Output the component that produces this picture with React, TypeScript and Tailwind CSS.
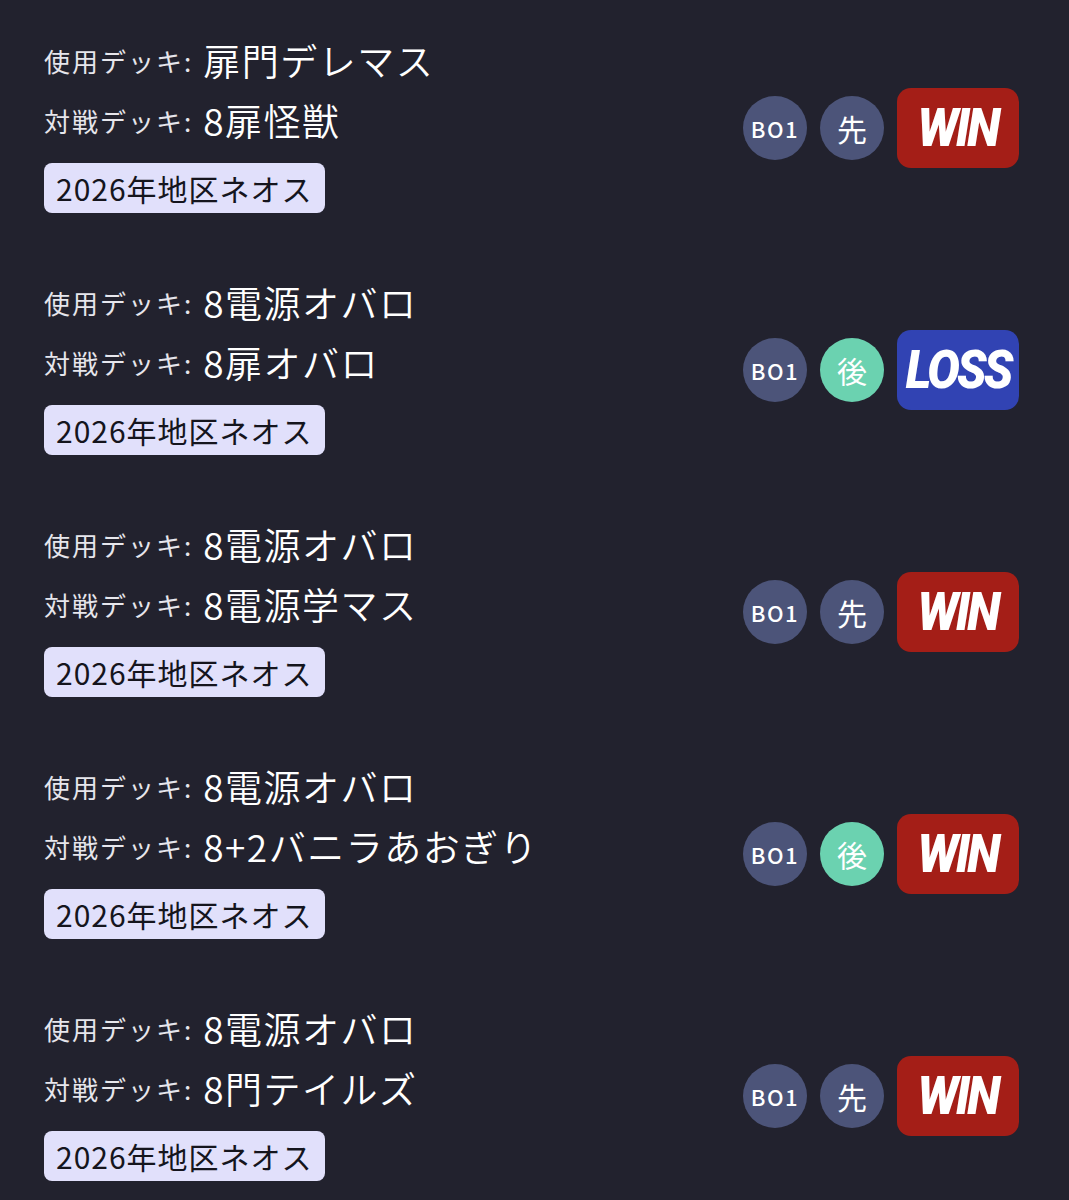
const matches = [
  { mine: '扉門デレマス', opp: '8扉怪獣', turn: '先', win: true },
  { mine: '8電源オバロ', opp: '8扉オバロ', turn: '後', win: false },
  { mine: '8電源オバロ', opp: '8電源学マス', turn: '先', win: true },
  { mine: '8電源オバロ', opp: '8+2バニラあおぎり', turn: '後', win: true },
  { mine: '8電源オバロ', opp: '8門テイルズ', turn: '先', win: true },
];

const jp = { fontFamily: '"Noto Sans CJK JP", "Noto Sans", sans-serif' };

const MatchRow = ({ mine, opp, turn, win }: (typeof matches)[number]) => {
  return (
    <div className="flex h-[242px] justify-between pr-[50px]">
      <div className="flex flex-col">
        <div className="flex h-[60px] items-center pb-[3px]">
          <span className="text-[26px] tracking-[2px] text-[#e6e6ec]">使用デッキ:</span>
          <span className="ml-[10px] text-[37px] font-[350] tracking-[1.5px] text-white">{mine}</span>
        </div>
        <div className="flex h-[60px] items-center pb-[3px]">
          <span className="text-[26px] tracking-[2px] text-[#e6e6ec]">対戦デッキ:</span>
          <span className="ml-[10px] text-[37px] font-[350] tracking-[1.5px] text-white">{opp}</span>
        </div>
        <div className="mt-[11px] flex h-[50px] items-center self-start rounded-lg bg-[#e1e0fb] px-[12px] text-[30px] tracking-[1px] text-[#15151d]">
          2026年地区ネオス
        </div>
      </div>
      <div className="mt-[56px] flex h-[80px] items-center gap-[13px]">
        <div className="flex h-[64px] w-[64px] items-center justify-center rounded-full bg-[#4c5479] text-[22px] font-medium tracking-[1.5px] text-white">
          BO1
        </div>
        <div
          className={
            turn === '先'
              ? 'flex h-[64px] w-[64px] items-center justify-center rounded-full bg-[#4c5479] text-[30px] text-white'
              : 'flex h-[64px] w-[64px] items-center justify-center rounded-full bg-[#6bd2b0] text-[30px] text-white'
          }
        >
          {turn}
        </div>
        <div
          className={
            win
              ? 'flex h-[80px] w-[122px] items-center justify-center rounded-[14px] bg-[#a41e17]'
              : 'flex h-[80px] w-[122px] items-center justify-center rounded-[14px] bg-[#3143b3]'
          }
        >
          <span
            className="inline-block scale-x-[0.9] text-[54px] font-black italic leading-none tracking-[-3px] text-white"
            style={{ fontFamily: 'Roboto, "Liberation Sans", sans-serif' }}
          >
            {win ? 'WIN' : 'LOSS'}
          </span>
        </div>
      </div>
    </div>
  );
};

export default function App() {
  return (
    <div className="min-h-[1200px] bg-[#22222e] pl-[44px] pt-[32px]" style={jp}>
      {matches.map((m, i) => (
        <MatchRow key={i} {...m} />
      ))}
    </div>
  );
}
